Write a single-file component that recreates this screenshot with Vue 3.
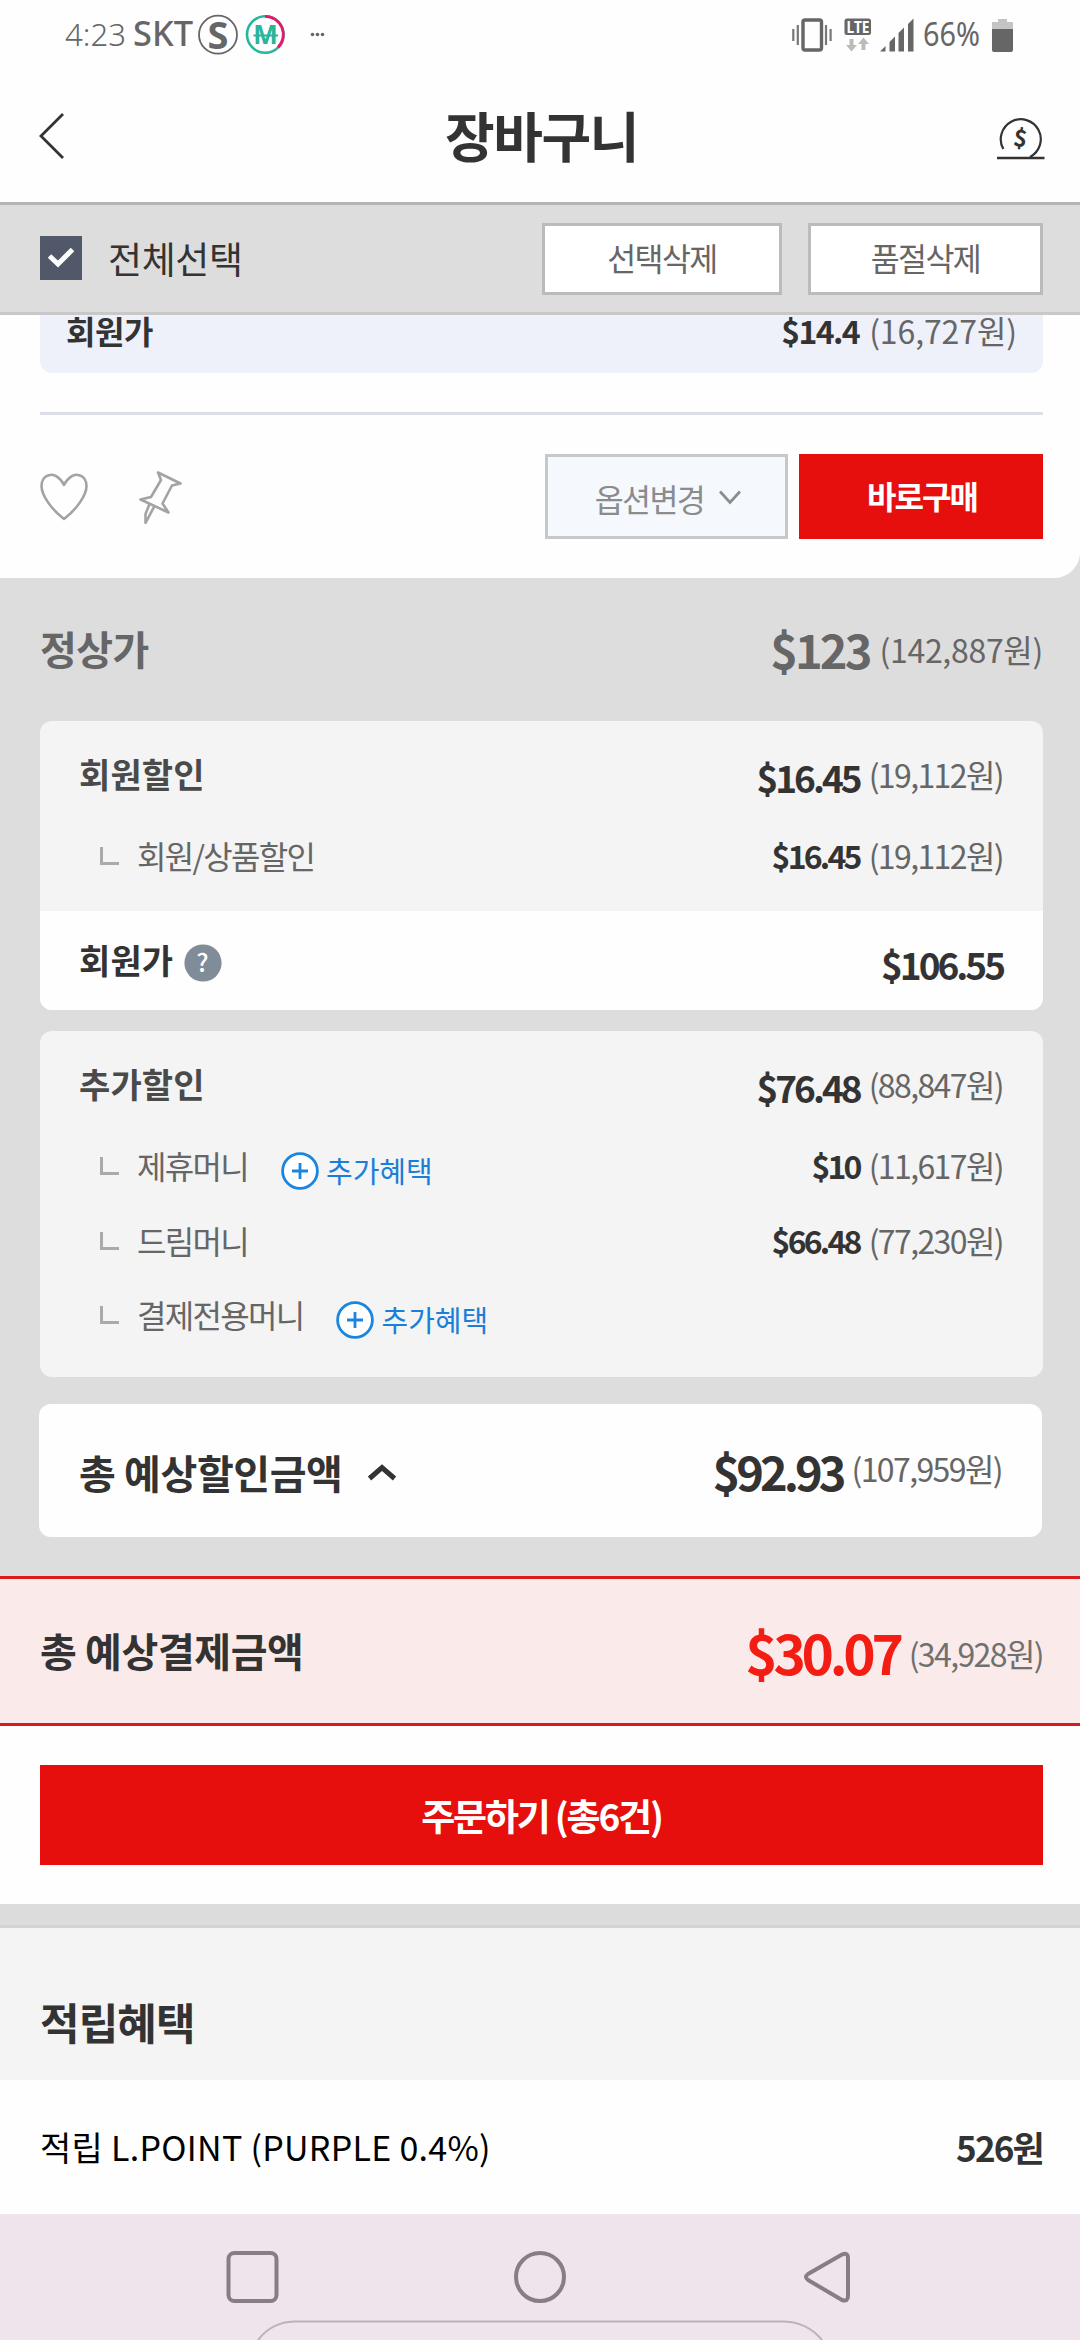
<script setup>
const extras = [
  { name: '제휴머니', more: true, usd: '$10', krw: '(11,617원)' },
  { name: '드림머니', more: false, usd: '$66.48', krw: '(77,230원)' },
  { name: '결제전용머니', more: true, usd: '', krw: '' },
]
</script>

<template>
  <div class="screen">
    <div class="status">
      <svg width="290" height="62" viewBox="60 0 290 62">
        <g fill="#666">
          <text x="65" y="46" font-size="32" font-weight="300" textLength="61" lengthAdjust="spacingAndGlyphs">4:23</text>
          <text x="133" y="46" font-size="35" font-weight="500" textLength="60" lengthAdjust="spacingAndGlyphs">SKT</text>
          <text x="218" y="48.5" font-size="38" font-weight="700" text-anchor="middle">S</text>
          <circle cx="312.5" cy="34.5" r="1.8" /><circle cx="317.5" cy="34.5" r="1.8" /><circle cx="322.5" cy="34.5" r="1.8" />
        </g>
        <circle cx="218" cy="34.7" r="19" fill="none" stroke="#666" stroke-width="1.8" />
        <circle cx="265.3" cy="34.5" r="18.3" fill="none" stroke="#27b59c" stroke-width="2.6" />
        <path d="M265 16.300A18.300 18.300 0 0 1 278 47.500" fill="none" stroke="#e8186d" stroke-width="2.800" />
        <text x="265.500" y="44" font-size="26" font-weight="700" fill="#27b59c" text-anchor="middle">M</text>
        <path d="M253.500 35.500H278" stroke="#27b59c" stroke-width="2" />
      </svg>
      <svg width="240" height="62" viewBox="780 0 240 62">
        <rect x="803" y="20" width="18.500" height="30" rx="2" fill="none" stroke="#666" stroke-width="3.400" />
        <path d="M793.300 29V41M797.800 25V45M826 25V45M830.600 29V41" stroke="#777" stroke-width="2.200" />
        <rect x="844.500" y="18.500" width="26.500" height="16.500" rx="2.500" fill="#666" />
        <text x="846.500" y="32.500" font-size="15.500" font-weight="700" fill="#fff" textLength="23" lengthAdjust="spacingAndGlyphs">LTE</text>
        <path d="M849.500 39h4v6h3.500l-5.500 6.500l-5.500 -6.500h3.500z M861.500 50h4v-6h3.500l-5.500 -6.500l-5.500 6.500h3.500z" fill="#bbb" />
        <path d="M880 51.500L885.500 46V51.500z M889.500 42L895 36.500V51.500H889.500z M898.500 33L904 27.500V51.500H898.500z M908 24L913.500 18.500V51.500H908z" fill="#666" />
        <text x="923" y="46" font-size="32" fill="#666" textLength="57" lengthAdjust="spacingAndGlyphs">66%</text>
        <path d="M992 22H998V19H1007V22H1013V30H992z" fill="#c4c4c4" />
        <path d="M992 29H1013V50q0 2 -2 2H994q-2 0 -2 -2z" fill="#666" />
      </svg>
    </div>

    <header class="head">
      <svg width="30" height="50" viewBox="0 0 30 50"><path d="M25 3L3 25L25 47" fill="none" stroke="#333" stroke-width="2.800" /></svg>
      <h1>장바구니</h1>
      <svg class="coin" width="50" height="46" viewBox="0 0 50 46">
        <path d="M7.300 33A20 20 0 1 1 34 41" fill="none" stroke="#333" stroke-width="2.200" />
        <path d="M1 42H48.500" stroke="#333" stroke-width="2.600" />
        <text x="24.500" y="30.500" font-size="23" font-weight="700" fill="#333" text-anchor="middle" transform="rotate(8 24.500 22)">$</text>
      </svg>
    </header>

    <div class="selectbar">
      <span class="check"><svg width="42" height="44" viewBox="0 0 42 44"><path d="M9.500 20L18 28L32.500 13.500" fill="none" stroke="#fff" stroke-width="5" /></svg></span>
      <span class="all">전체선택</span>
      <button class="del first">선택삭제</button>
      <button class="del">품절삭제</button>
    </div>

    <section class="item">
      <div class="member">
        <b class="mlabel">회원가</b>
        <b class="musd">$14.4</b><span class="mkrw">(16,727원)</span>
      </div>
      <div class="actions">
        <svg width="48" height="54" viewBox="0 0 48 54"><path d="M24 15C20 7 14 4 10 5C4 6 1.500 11 1.500 16C1.500 25 11 39 24 49C37 39 46.500 25 46.500 16C46.500 11 44 6 38 5C34 4 28 7 24 15Z" fill="none" stroke="#a3a3a3" stroke-width="2.600" stroke-linejoin="round" /></svg>
        <svg class="pin" width="44" height="54" viewBox="0 0 44 54"><path d="M19 2.500L41.500 13.500L33 15.500L23.500 33.500L29.500 42.500L1.500 29.500L12 27L22 10ZM15.500 36L6.500 53V44L10.500 34" fill="none" stroke="#a3a3a3" stroke-width="2.600" stroke-linejoin="round" /></svg>
        <button class="option">옵션변경<svg width="22" height="16" viewBox="0 0 22 16"><path d="M1 1.500L11 12.500L21 1.500" fill="none" stroke="#8a8c8e" stroke-width="2.800" /></svg></button>
        <button class="buy">바로구매</button>
      </div>
    </section>

    <section class="summary">
      <div class="normal">
        <b class="nlabel">정상가</b><b class="usd big">$123</b><span class="krw">(142,887원)</span>
      </div>

      <div class="card">
        <div class="row top"><b class="heading">회원할인</b><b class="usd mid">$16.45</b><span class="krw">(19,112원)</span></div>
        <div class="row sub lead"><i class="branch"></i><span class="name">회원/상품할인</span><b class="usd">$16.45</b><span class="krw">(19,112원)</span></div>
        <div class="row price">
          <b class="heading dark">회원가</b>
          <svg class="help" width="38" height="38" viewBox="0 0 38 38"><circle cx="19" cy="19" r="18.600" fill="#818c99" /><text x="18.500" y="28" font-size="25" font-weight="500" fill="#fff" text-anchor="middle">?</text></svg>
          <b class="usd mid">$106.55</b>
        </div>
      </div>

      <div class="card second">
        <div class="row top"><b class="heading">추가할인</b><b class="usd mid">$76.48</b><span class="krw">(88,847원)</span></div>
        <div v-for="e in extras" :key="e.name" class="row sub">
          <i class="branch"></i><span class="name">{{ e.name }}</span>
          <span v-if="e.more" class="more">
            <svg width="38" height="38" viewBox="0 0 38 38"><circle cx="19" cy="19" r="17.400" fill="#fff" stroke="#1a86e0" stroke-width="2.800" /><path d="M11 19H27M19 11V27" stroke="#1a86e0" stroke-width="2.800" /></svg>
            <span>추가혜택</span>
          </span>
          <b class="usd">{{ e.usd }}</b><span class="krw">{{ e.krw }}</span>
        </div>
      </div>

      <div class="card total">
        <b class="tlabel">총 예상할인금액</b>
        <svg width="30" height="20" viewBox="0 0 30 20"><path d="M2.500 15.500L15 4.500L27.500 15.500" fill="none" stroke="#333" stroke-width="5" /></svg>
        <b class="usd big">$92.93</b><span class="krw">(107,959원)</span>
      </div>
    </section>

    <div class="pay">
      <b class="tlabel">총 예상결제금액</b><b class="usd huge">$30.07</b><span class="krw">(34,928원)</span>
    </div>
    <div class="order"><button>주문하기 (총6건)</button></div>
    <div class="gap"></div>
    <h2 class="benefit">적립혜택</h2>
    <div class="point"><span>적립 L.POINT (PURPLE 0.4%)</span><b>526원</b></div>

    <nav class="nav">
      <svg width="1080" height="126" viewBox="0 0 1080 126" fill="none" stroke="#877d84" stroke-width="4">
        <rect x="228.500" y="39" width="48" height="48" rx="6" />
        <circle cx="540" cy="63" r="24" />
        <path d="M842 40.500L808 60Q804 63 808 66L842 86Q848 88 848 82V44Q848 38 842 40.500Z" stroke-linejoin="round" />
        <path d="M258 126Q272 108 294 107.500H784Q807 108 822 126" stroke="#bdb2ba" stroke-width="2" />
      </svg>
    </nav>
  </div>
</template>

<style>
html, body { margin: 0; background: #fff; }
</style>

<style scoped>
.screen {
  width: 1080px; height: 2340px; overflow: hidden; background: #fefefe; color: #333;
  font-family: "Noto Sans CJK KR", "Noto Sans", sans-serif; display: flex; flex-direction: column;
}
.screen > * { flex: none; box-sizing: border-box; }
svg { display: block; flex: none; }
button { font: inherit; border: 0; padding: 0; border-radius: 0; margin: 0; box-sizing: border-box; }
.status { height: 62px; padding: 0 60px; display: flex; justify-content: space-between; }
.status text { font-family: "Noto Sans", sans-serif; }
.head { height: 140px; padding: 8px 34px 0 38px; display: flex; align-items: center; justify-content: space-between; }
.head h1 { margin: 0 0 3px; font-size: 54px; line-height: 70px; letter-spacing: -1.400px; padding-left: 19px; }
.coin { margin-top: 5px; }
.selectbar {
  height: 113px; border-top: 3px solid #b5b5b5; border-bottom: 3px solid #c8c8c8; background: #ddd;
  padding: 0 37px 0 40px; display: flex; align-items: center;
}
.check { width: 42px; height: 44px; background: #50586a; margin-bottom: 1px; }
.all { font-size: 37px; margin: 0 auto 1px 26px; letter-spacing: -.4px; }
.del { width: 235px; height: 72px; border: 3px solid #bbb; background: #fff; color: #666; font-size: 31.500px; letter-spacing: -1.600px; padding-bottom: 3px; }
.first { width: 240px; margin-right: 26px; }
.item { height: 263px; padding: 0 37px 0 40px; background: #fefefe; position: relative; }
/* rounded lower-right corner showing the grey summary area beneath */
.item::after { content: ""; position: absolute; right: 0; bottom: 0; width: 26px; height: 26px; background: radial-gradient(circle at 0 0, transparent 25.500px, #ddd 26.500px); }
.member { height: 58px; background: #eef1fa; border-radius: 0 0 12px 12px; padding: 0 26px 28px; box-sizing: border-box; display: flex; align-items: center; font-size: 32px; }
.mlabel { margin-right: auto; letter-spacing: -.4px; }
.musd { letter-spacing: -1.600px; }
.mkrw { margin-left: 10px; color: #666; letter-spacing: -.1px; }
.actions { margin-top: 39px; border-top: 3px solid #dcdfe8; padding-top: 39px; display: flex; align-items: center; }
.pin { margin-left: 51px; margin-right: auto; }
.option { width: 243px; height: 85px; margin-right: 11px; border: 3px solid #c5c9c9; background: #f5f8fd; color: #8a8c8e; font-size: 31.500px; letter-spacing: -1.600px; display: flex; align-items: center; justify-content: center; gap: 15px; padding: 3px 0 0 3px; }
.buy { width: 244px; height: 85px; background: #e60f0d; color: #fff; font-size: 32px; font-weight: 700; letter-spacing: -1.900px; padding: 0 0 4px 2px; }
.summary { height: 998px; background: #ddd; padding: 0 37px 0 40px; }
.normal { height: 143px; display: flex; align-items: center; box-sizing: border-box; padding-bottom: 2px; color: #666; }
.nlabel { font-size: 40px; letter-spacing: -.6px; margin: 0 auto 2px 0; }
.normal .usd.big { color: #666; letter-spacing: -2.900px; }
.normal .krw { letter-spacing: -.3px; margin-left: 10px; }
.usd { font-size: 32px; letter-spacing: -2.800px; color: #333; margin-left: auto; }
.usd.mid { font-size: 37px; letter-spacing: -3px; margin-top: 6px; }
.usd.big { font-size: 47px; letter-spacing: -4px; }
.usd.huge { font-size: 55px; letter-spacing: -4.300px; color: #f41d14; }
.krw { font-size: 32px; letter-spacing: -1.600px; margin-left: 9px; color: #666; }
.card { background: #f4f4f4; border-radius: 12px; overflow: hidden; }
.second { margin-top: 21px; height: 346px; }
.row { height: 74.500px; padding: 0 40px 0 39px; display: flex; align-items: center; }
.row.top { height: 97px; box-sizing: border-box; padding-top: 9px; }
.heading { font-size: 34px; letter-spacing: .1px; color: #4a4a4a; margin-bottom: 1px; }
.heading.dark { color: #333; margin-bottom: 3px; }
.row.sub { padding-left: 60px; }
.branch { width: 16px; height: 15px; border-left: 3px solid #aaa; border-bottom: 3px solid #aaa; margin-top: 2px; }
.name { font-size: 32px; letter-spacing: -1.700px; color: #666; margin-left: 18px; white-space: nowrap; }
.more { display: flex; align-items: center; color: #1b7ed8; font-size: 29px; margin-left: 33px; gap: 7px; padding-top: 11px; }
.more span { margin-top: -2px; letter-spacing: 0; }
.row.price { height: 99px; background: #fefefe; }
.row.lead { height: 93px; box-sizing: border-box; padding-bottom: 20px; }
.help { margin-left: 11px; margin-top: 4px; }
.total { margin: 27px 1px 0 -1px; height: 133px; background: #fefefe; padding: 0 40px; display: flex; align-items: center; }
.tlabel { font-size: 40px; letter-spacing: -.4px; margin-top: 3px; }
.total svg { margin-left: 25px; margin-top: 5px; }
.total .krw { margin-bottom: 5px; }
.pay { height: 150px; border-top: 3px solid #d9191c; border-bottom: 3px solid #d9191c; background: #fbeaea; padding: 0 37px 0 40px; display: flex; align-items: center; }
.pay .tlabel { margin-top: -3px; }
.pay .krw { margin-top: 4px; color: #707070; }
.order { height: 178px; padding: 39px 37px 0 40px; }
.order button { width: 100%; height: 100px; background: #e60f0d; color: #fff; font-size: 37px; font-weight: 700; letter-spacing: -2.200px; }
.gap { height: 24px; background: #dcdcdc; border-bottom: 3px solid #d3d3d3; }
.benefit { height: 152px; margin: 0; background: #f4f4f4; padding: 34px 40px 0; line-height: 118px; font-size: 43px; letter-spacing: -.9px; }
.point { height: 134px; padding: 0 37px 2px 40px; display: flex; align-items: center; justify-content: space-between; font-size: 34px; letter-spacing: .28px; color: #000; }
.point b { color: #333; letter-spacing: -1.800px; font-size: 35px; }
.nav { height: 126px; background: #f0e4ec; }
</style>
